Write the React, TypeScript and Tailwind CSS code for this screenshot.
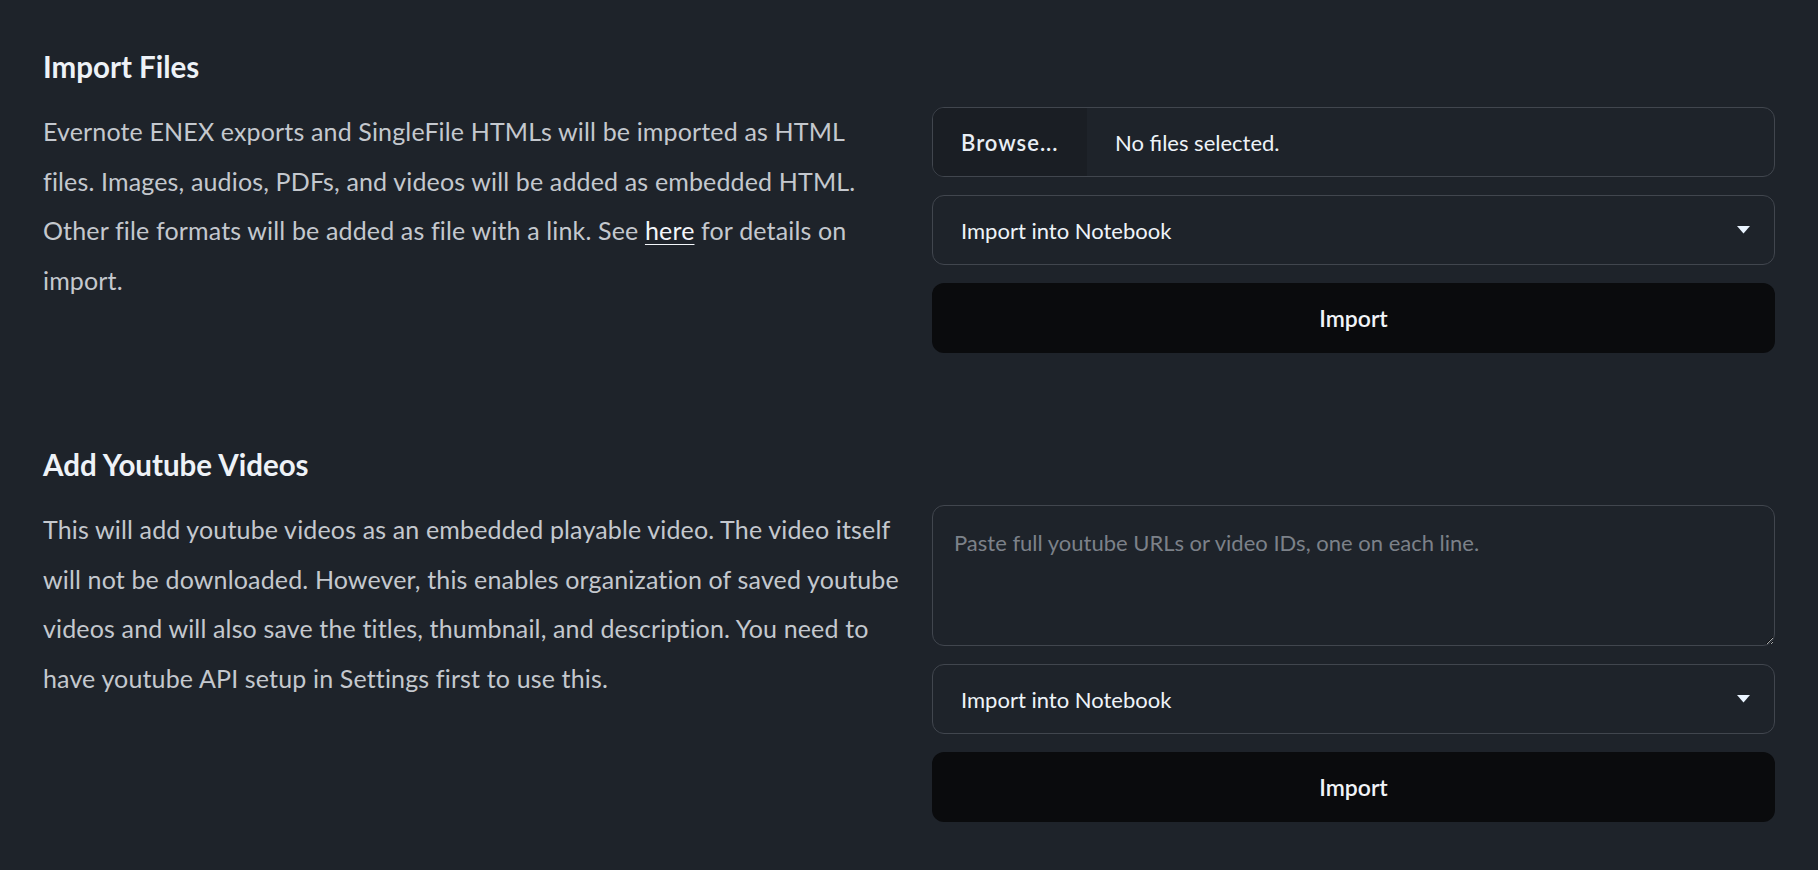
import React from "react";

const font = { fontFamily: "Lato, 'Noto Sans', sans-serif" };

function Select() {
  return (
    <div className="flex h-[70px] items-center justify-between rounded-[12px] border border-[#41464e] bg-[#1e232a] pl-[28px] pr-[24px]">
      <span className="text-[22px] text-[#eef3f8]">Import into Notebook</span>
      <svg width="13" height="8" viewBox="0 0 13 8">
        <path d="M0 0 L13 0 L6.5 7.5 Z" fill="#eaf4ff" />
      </svg>
    </div>
  );
}

function ImportButton() {
  return (
    <button className="flex h-[70px] w-full items-center justify-center rounded-[12px] bg-[#0a0b0d] text-[23px] font-semibold text-[#f1f4f8]">
      Import
    </button>
  );
}

export default function App() {
  return (
    <div
      className="min-h-screen bg-[#1e232a] px-[43px] pt-[47px] pb-[40px]"
      style={font}
    >
      <section>
        <h2 className="mb-[20px] text-[29.5px] font-bold leading-[40px] text-[#eef2f7]">
          Import Files
        </h2>
        <div className="grid grid-cols-2 gap-x-[46px]">
          <p className="whitespace-nowrap text-[25px] leading-[49.5px] tracking-[0.15px] text-[#c4c8ce]">
            Evernote ENEX exports and SingleFile HTMLs will be imported as HTML
            <br />
            files. Images, audios, PDFs, and videos will be added as embedded HTML.
            <br />
            Other file formats will be added as file with a link. See{" "}
            <a className="text-[#f3f6fa] underline underline-offset-4 decoration-1">
              here
            </a>{" "}
            for details on
            <br />
            import.
          </p>
          <div className="flex flex-col gap-[18px]">
            <div className="flex h-[70px] items-stretch overflow-hidden rounded-[12px] border border-[#41464e]">
              <div className="flex w-[154px] items-center bg-[#1a1e24] pl-[28px] text-[22px] font-semibold tracking-[1px] text-[#e9eef5]">
                Browse...
              </div>
              <div className="flex items-center pl-[28px] text-[22px] text-[#eef3f8]">
                No files selected.
              </div>
            </div>
            <Select />
            <ImportButton />
          </div>
        </div>
      </section>

      <section className="mt-[92px]">
        <h2 className="mb-[20px] text-[29.5px] font-bold leading-[40px] text-[#eef2f7]">
          Add Youtube Videos
        </h2>
        <div className="grid grid-cols-2 gap-x-[46px]">
          <p className="whitespace-nowrap text-[25px] leading-[49.5px] tracking-[0.15px] text-[#c4c8ce]">
            This will add youtube videos as an embedded playable video. The video itself
            <br />
            will not be downloaded. However, this enables organization of saved youtube
            <br />
            videos and will also save the titles, thumbnail, and description. You need to
            <br />
            have youtube API setup in Settings first to use this.
          </p>
          <div className="flex flex-col gap-[18px]">
            <textarea
              className="block h-[141px] w-full rounded-[12px] border border-[#41464e] bg-[#1e232a] px-[21px] pt-[20px] text-[22px] text-[#eef3f8] outline-none placeholder:text-[#7c8189]"
              placeholder="Paste full youtube URLs or video IDs, one on each line."
            />
            <Select />
            <ImportButton />
          </div>
        </div>
      </section>
    </div>
  );
}
